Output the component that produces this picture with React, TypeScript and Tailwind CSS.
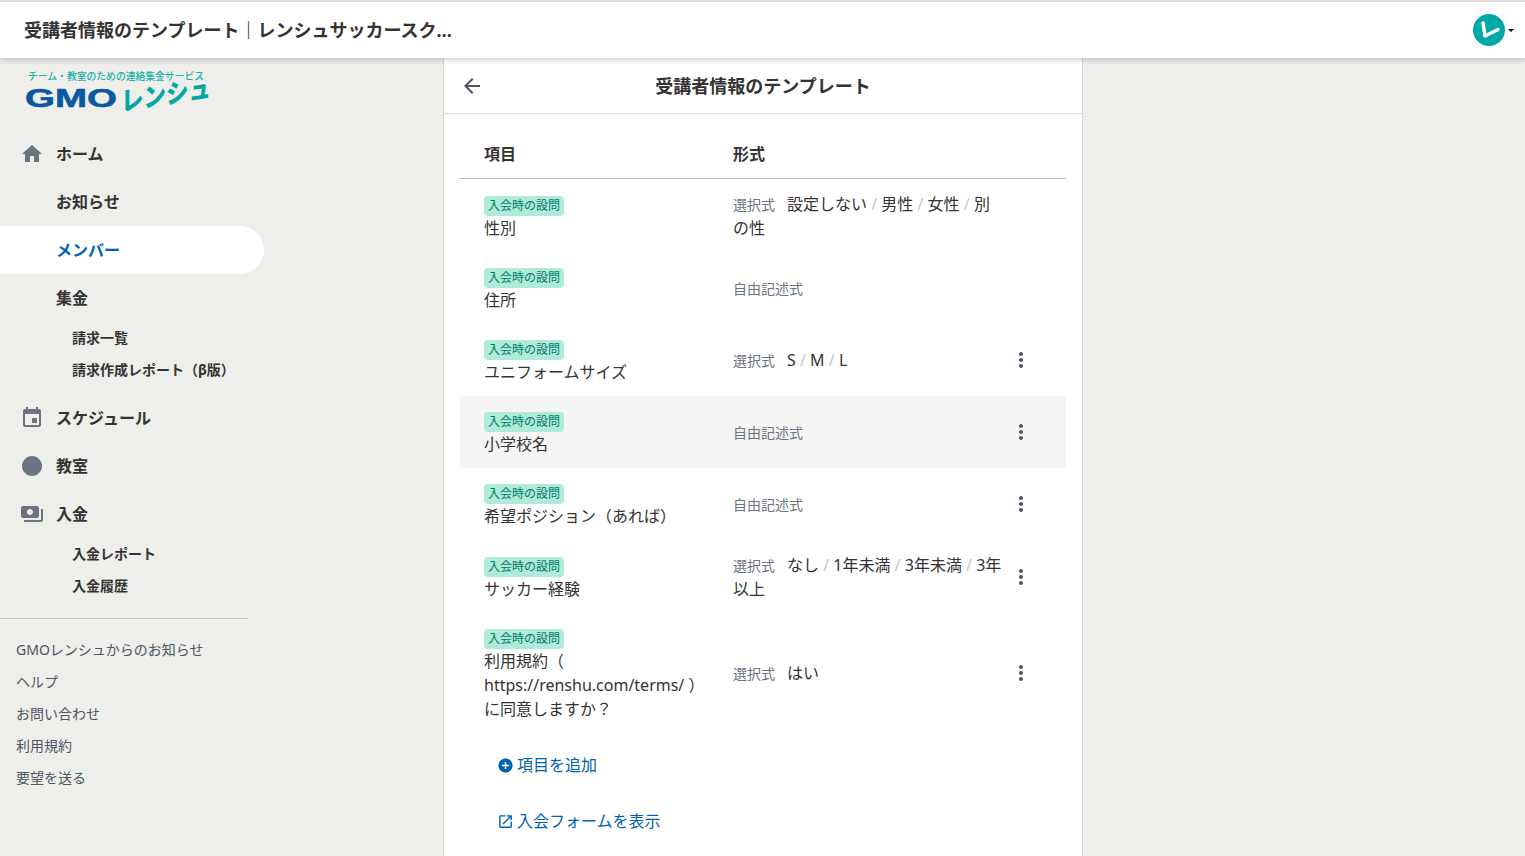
import React from "react";

const font = { fontFamily: '"Noto Sans", "Noto Sans CJK JP", sans-serif' };

const Icon = ({ d, className }: { d: string; className: string }) => (
  <svg viewBox="0 0 24 24" className={className} fill="currentColor">
    <path d={d} />
  </svg>
);

const P = {
  home: "M10 20v-6h4v6h5v-8h3L12 3 2 12h3v8z",
  event:
    "M17 12h-5v5h5v-5zM16 1v2H8V1H6v2H5c-1.11 0-1.99.9-1.99 2L3 19c0 1.1.89 2 2 2h14c1.1 0 2-.9 2-2V5c0-1.1-.9-2-2-2h-1V1h-2zm3 18H5V8h14v11z",
  lens: "M12 2C6.48 2 2 6.48 2 12s4.48 10 10 10 10-4.48 10-10S17.52 2 12 2z",
  pay: "M19 14V6c0-1.1-.9-2-2-2H3c-1.1 0-2 .9-2 2v8c0 1.1.9 2 2 2h14c1.1 0 2-.9 2-2zm-9-1c-1.66 0-3-1.34-3-3s1.34-3 3-3 3 1.34 3 3-1.34 3-3 3zm13-6v11c0 1.1-.9 2-2 2H4v-2h17V7h2z",
  add: "M12 2C6.48 2 2 6.48 2 12s4.48 10 10 10 10-4.48 10-10S17.52 2 12 2zm5 11h-4v4h-2v-4H7v-2h4V7h2v4h4v2z",
  open: "M19 19H5V5h7V3H5c-1.11 0-2 .9-2 2v14c0 1.1.89 2 2 2h14c1.1 0 2-.9 2-2v-7h-2v7zM14 3v2h3.59l-9.83 9.83 1.41 1.41L19 6.41V10h2V3h-7z",
  more: "M12 8c1.1 0 2-.9 2-2s-.9-2-2-2-2 .9-2 2 .9 2 2 2zm0 2c-1.1 0-2 .9-2 2s.9 2 2 2 2-.9 2-2-.9-2-2-2zm0 6c-1.1 0-2 .9-2 2s.9 2 2 2 2-.9 2-2-.9-2-2-2z",
  back: "M20 11H7.83l5.59-5.59L12 4l-8 8 8 8 1.41-1.41L7.83 13H20v-2z",
};

const NavItem = ({ icon, label, active }: { icon?: string; label: string; active?: boolean }) => (
  <div
    className={`flex h-12 w-[264px] items-center rounded-r-full ${active ? "bg-white text-[#0062b1]" : "text-[#333]"}`}
  >
    <div className="flex w-[56px] justify-center pl-2">
      {icon && <Icon d={icon} className="h-6 w-6 text-[#6b7280]" />}
    </div>
    <span className="text-base font-bold">{label}</span>
  </div>
);

const SubItem = ({ label }: { label: string }) => (
  <div className="flex h-8 items-center pl-[72px] text-sm font-bold text-[#333]">{label}</div>
);

const FootItem = ({ label }: { label: string }) => (
  <div className="flex h-8 items-center pl-4 text-sm text-[#4b5563]">{label}</div>
);

const Options = ({ items }: { items: string[] }) => (
  <span className="text-base text-[#333]">
    {items.map((t, i) => (
      <React.Fragment key={t}>
        {i > 0 && <span className="text-[#c4c7cc]"> / </span>}
        {t}
      </React.Fragment>
    ))}
  </span>
);

type Row = {
  name: React.ReactNode;
  options?: string[];
  dots?: boolean;
  hover?: boolean;
  gap?: boolean;
};

const rows: Row[] = [
  { name: "性別", options: ["設定しない", "男性", "女性", "別の性"] },
  { name: "住所" },
  { name: "ユニフォームサイズ", options: ["S", "M", "L"], dots: true },
  { name: "小学校名", dots: true, hover: true },
  { name: "希望ポジション（あれば）", dots: true },
  { name: "サッカー経験", options: ["なし", "1年未満", "3年未満", "3年以上"], dots: true, gap: true },
  {
    name: (
      <>
        利用規約（
        <br />
        https://renshu.com/terms/ ）
        <br />
        に同意しますか？
      </>
    ),
    options: ["はい"],
    dots: true,
  },
];

const TableRow = ({ row }: { row: Row }) => (
  <div className={`flex items-center ${row.hover ? "bg-[#f4f5f4]" : ""} ${row.gap ? "mt-px" : ""}`}>
    <div className="w-[273px] pt-4 pb-3 pl-6 pr-3">
      <span className="block h-5 w-20 rounded-sm bg-[#b0ead8] text-center text-xs leading-5 text-[#00796b]">
        入会時の設問
      </span>
      <div className="text-base leading-6 text-[#333]">{row.name}</div>
    </div>
    <div className="w-[269px] text-base leading-6">
      {row.options ? (
        <>
          <span className="mr-3 text-sm text-[#6b7280]">選択式</span>
          <Options items={row.options} />
        </>
      ) : (
        <span className="text-sm text-[#6b7280]">自由記述式</span>
      )}
    </div>
    <div className="flex w-[38px] justify-center">
      {row.dots && <Icon d={P.more} className="h-6 w-6 text-[#4b5563]" />}
    </div>
  </div>
);

export default function App() {
  return (
    <div className="flex h-[856px] w-full flex-col overflow-hidden bg-[#eeefea]" style={font}>
      <header className="relative z-10 flex h-[58px] shrink-0 items-center justify-between border-t-2 border-[#dcdcdc] bg-white pl-6 pr-[11px] shadow-[0_2px_6px_rgba(0,0,0,0.2)]">
        <div className="w-[430px] truncate text-lg font-bold text-[#333]">
          受講者情報のテンプレート｜レンシュサッカースクール
        </div>
        <div className="flex items-center gap-[3px]">
          <div className="flex h-8 w-8 items-center justify-center rounded-full bg-[#00a9a5]">
            <svg viewBox="0 0 32 32" className="h-8 w-8" fill="none" stroke="white" strokeWidth="3.5" strokeLinecap="round" strokeLinejoin="round">
              <path d="M10 9 L12 22 L25 15.5" />
            </svg>
          </div>
          <div className="h-0 w-0 border-x-[3px] border-t-[3px] border-x-transparent border-t-black" />
        </div>
      </header>

      <div className="flex min-h-0 flex-1">
        <aside className="w-[444px] shrink-0 border-r border-[#d9d9d9]">
          <div className="h-[72px] pl-[25px] pt-3">
            <div className="pl-[3px] text-[9.8px] font-medium leading-[14px] text-[#19b0ab]">
              チーム・教室のための連絡集金サービス
            </div>
            <svg viewBox="0 0 190 36" className="-mt-[1px] h-[36px] w-[190px] overflow-visible">
              <text
                x="0"
                y="24"
                textLength="92"
                lengthAdjust="spacingAndGlyphs"
                fontFamily='"Liberation Sans", sans-serif'
                fontWeight="700"
                fontSize="26"
                fill="#0a57a4"
                stroke="#0a57a4"
                strokeWidth="0.6"
              >
                GMO
              </text>
              <g transform="translate(96 6) skewY(-9)">
                <text
                  x="0"
                  y="22"
                  textLength="90"
                  lengthAdjust="spacingAndGlyphs"
                  fontFamily='"Noto Sans CJK JP", sans-serif'
                  fontWeight="900"
                  fontSize="26"
                  fill="#00a9a5"
                >
                  レンシュ
                </text>
              </g>
            </svg>
          </div>
          <NavItem icon={P.home} label="ホーム" />
          <NavItem label="お知らせ" />
          <NavItem label="メンバー" active />
          <NavItem label="集金" />
          <SubItem label="請求一覧" />
          <SubItem label="請求作成レポート（β版）" />
          <div className="h-2" />
          <NavItem icon={P.event} label="スケジュール" />
          <NavItem icon={P.lens} label="教室" />
          <NavItem icon={P.pay} label="入金" />
          <SubItem label="入金レポート" />
          <SubItem label="入金履歴" />
          <div className="mt-4 mb-[15px] h-px w-[248px] bg-[#c5c8d0]" />
          <FootItem label="GMOレンシュからのお知らせ" />
          <FootItem label="ヘルプ" />
          <FootItem label="お問い合わせ" />
          <FootItem label="利用規約" />
          <FootItem label="要望を送る" />
        </aside>

        <main className="w-[639px] shrink-0 border-r border-[#d9d9d9] bg-white">
          <div className="relative flex h-[56px] items-center justify-center border-b border-[#d9dadc]">
            <Icon d={P.back} className="absolute left-4 top-4 h-6 w-6 text-[#4b5563]" />
            <h1 className="text-lg font-bold text-[#333]">受講者情報のテンプレート</h1>
          </div>
          <div className="px-4 pt-4">
            <div className="mb-px flex h-[49px] items-center border-b border-[#bdbdbd] text-base font-bold text-[#333]">
              <div className="w-[273px] pl-6">項目</div>
              <div>形式</div>
            </div>
            {rows.map((r, i) => (
              <TableRow key={i} row={r} />
            ))}
            <div className="mt-1 flex h-14 items-center gap-[3px] pl-[37px] text-base text-[#0062b1]">
              <Icon d={P.add} className="h-[17px] w-[17px]" />
              項目を追加
            </div>
            <div className="flex h-14 items-center gap-[3px] pl-[37px] text-base text-[#0062b1]">
              <Icon d={P.open} className="h-[17px] w-[17px]" />
              入会フォームを表示
            </div>
          </div>
        </main>
        <div className="flex-1" />
      </div>
    </div>
  );
}
